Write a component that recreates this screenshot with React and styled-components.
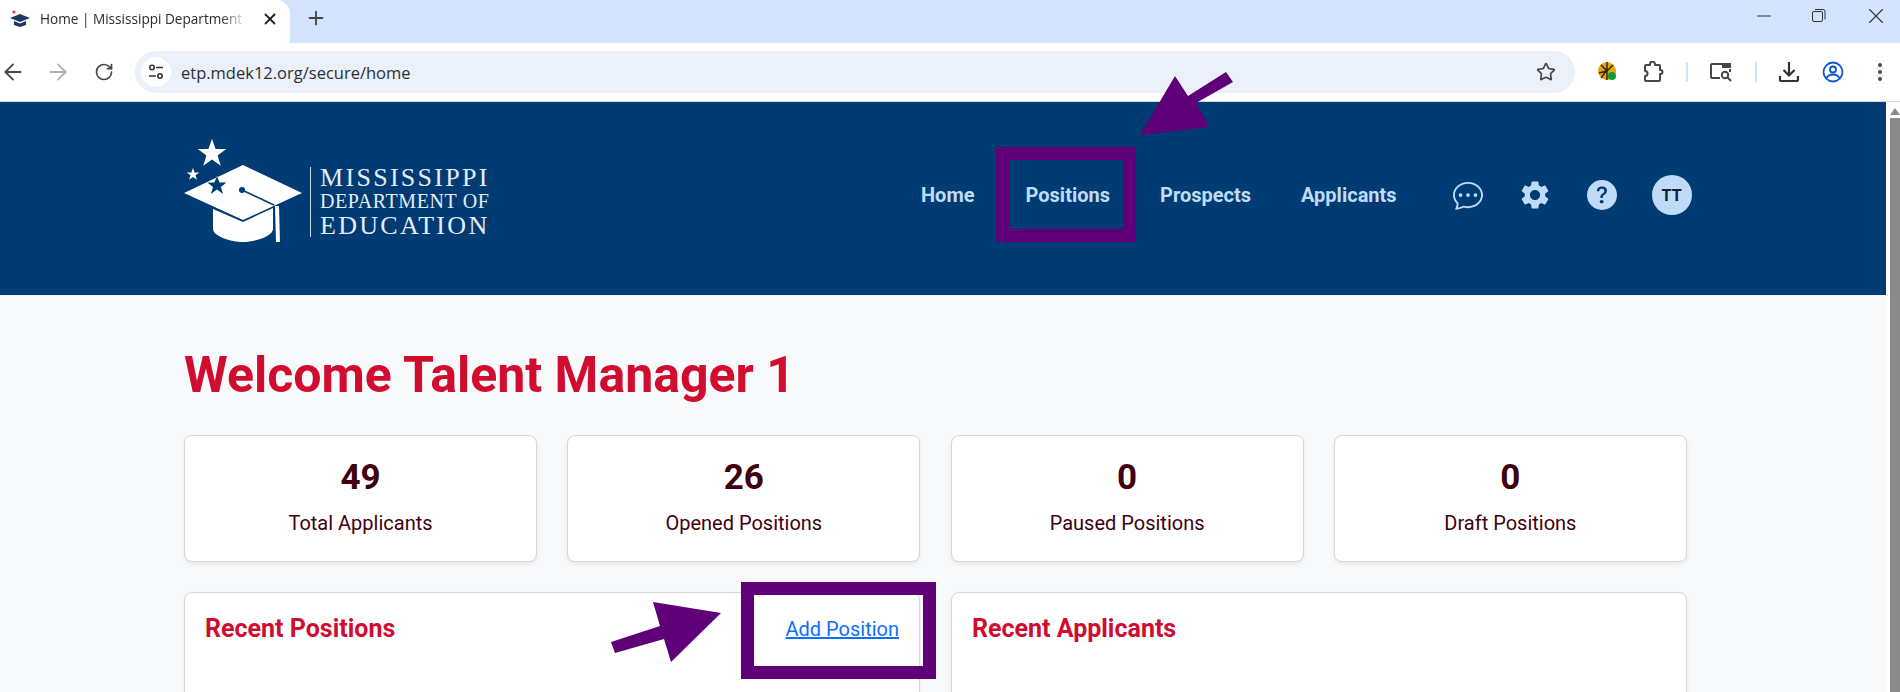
import styled, { createGlobalStyle } from "styled-components"
import { ArrowLeft, ArrowRight, RotateCw, Star, Plus, X, Minus } from "lucide-react"
import { BsChatDots, BsFillQuestionCircleFill } from "react-icons/bs"
import { MdSettings } from "react-icons/md"

const Global = createGlobalStyle`
  html, body { margin: 0; padding: 0; height: 692px; overflow: hidden; background: #fff; }
  * { box-sizing: border-box; }
  body { font-family: Roboto, sans-serif; }
`
const Screen = styled.div`
  position: relative;
  width: 1900px;
  height: 692px;
  overflow: hidden;
  display: flex;
  flex-direction: column;
`
const TabStrip = styled.div`
  height: 43px;
  background: #d3e3fd;
  display: flex;
  align-items: center;
`
const Tab = styled.div`
  width: 290px;
  height: 43px;
  background: #fff;
  border-radius: 0 14px 0 0;
  display: flex;
  align-items: center;
  padding: 0 0 6px 9px;
  font-family: "Open Sans", sans-serif;
  font-size: 13.6px;
  color: #2b2b2b;
`
const TabTitle = styled.span`
  width: 206px;
  margin-left: 9px;
  white-space: nowrap;
  -webkit-mask-image: linear-gradient(to right, #000 88%, transparent);
  mask-image: linear-gradient(to right, #000 88%, transparent);
`
const TabClose = styled.span`
  display: flex;
  margin-left: 15px;
  color: #222;
`
const NewTab = styled.span`
  display: flex;
  margin: 0 0 7px 15px;
  color: #444;
`
const WindowButtons = styled.div`
  margin-left: auto;
  display: flex;
  gap: 37px;
  padding: 0 11px 11px 0;
  color: #333;
  align-items: center;
`
const Toolbar = styled.div`
  height: 59px;
  background: #fff;
  border-bottom: 1px solid #d8d8d8;
  display: flex;
  align-items: center;
  color: #474747;
`
const NavIcons = styled.div`
  display: flex;
  gap: 19px;
  width: 135px;
  align-items: center;
`
const Reload = styled(RotateCw)`
  margin-left: 4px;
`
const Omnibox = styled.div`
  width: 1440px;
  height: 42px;
  border-radius: 21px;
  background: #ebf0f9;
  display: flex;
  align-items: center;
  padding: 0 19px 0 6px;
`
const TuneBadge = styled.span`
  width: 30px;
  height: 30px;
  border-radius: 50%;
  background: #fff;
  display: flex;
  align-items: center;
  justify-content: center;
`
const Url = styled.span`
  flex: 1;
  margin-left: 10px;
  font-family: "Open Sans", sans-serif;
  font-size: 16.5px;
  color: #2a2f36;
`
const ToolIcons = styled.div`
  display: flex;
  align-items: center;
  margin-left: 23px;
  gap: 21.5px;
`
const ToolSlot = styled.span`
  display: flex;
  margin-left: ${p => p.$push || 0}px;
`
const Divider = styled.span`
  width: 2px;
  height: 20px;
  background: #d3e3fd;
`
const Body = styled.div`
  flex: 1;
  display: flex;
  min-height: 0;
`
const Page = styled.div`
  width: 1886px;
  background: #f8f9fa;
  overflow: hidden;
`
const Scrollbar = styled.div`
  flex: 1;
  background: #fff;
  display: flex;
  flex-direction: column;
  align-items: flex-end;
`
const ScrollArrow = styled.div`
  width: 0;
  height: 0;
  margin: 6px 0 3px;
  border-left: 5px solid transparent;
  border-right: 5px solid transparent;
  border-bottom: 7px solid #8a8a8a;
`
const ScrollThumb = styled.div`
  width: 10px;
  flex: 1;
  background: #8a8a8a;
`
const Header = styled.header`
  height: 193px;
  background: #003b73;
  display: flex;
  align-items: flex-start;
  padding: 36px 0 0 184px;
`
const LogoWrap = styled.div`
  width: 306px;
  height: 104px;
  display: flex;
  align-items: center;
`
const LogoText = styled.div`
  align-self: flex-end;
  margin: 0 0 5px 6px;
  padding-left: 9px;
  border-left: 1px solid #c9d6e4;
  height: 70px;
  display: flex;
  flex-direction: column;
  justify-content: space-between;
  font-family: "Liberation Serif", serif;
  color: #e6ecf3;
  white-space: nowrap;
  line-height: 0.86;
`
const LogoLine = styled.span`
  font-size: ${p => p.$size}px;
  letter-spacing: ${p => p.$spacing}px;
`
const Nav = styled.nav`
  display: flex;
  align-items: center;
  height: 48px;
  margin: 33px 0 0 431px;
  font-size: 20px;
  font-weight: 700;
  color: #bfdbf7;
`
const NavLink = styled.a`
  margin-right: ${p => p.$gap}px;
  white-space: nowrap;
`
const NavIcon = styled.span`
  display: flex;
  width: 30px;
  justify-content: center;
  margin-right: ${p => p.$gap}px;
  & > svg {
    flex-shrink: 0;
  }
`
const Avatar = styled.span`
  width: 40px;
  height: 40px;
  border-radius: 50%;
  background: #bfdbf7;
  color: #0e2238;
  font-size: 16px;
  font-weight: 700;
  display: flex;
  align-items: center;
  justify-content: center;
`
const Main = styled.main`
  padding: 52px 0 0 184px;
`
const Title = styled.h1`
  margin: 0;
  font-size: 50px;
  font-weight: 700;
  line-height: 56px;
  color: #d00c2f;
`
const Stats = styled.div`
  display: grid;
  grid-template-columns: repeat(4, 353px);
  column-gap: 30.3px;
  margin-top: 32px;
`
const Card = styled.div`
  background: #fff;
  border: 1px solid #d5d7d9;
  border-radius: 8px;
  box-shadow: 0 2px 4px rgba(0, 0, 0, 0.07);
`
const StatCard = styled(Card)`
  height: 127px;
  display: flex;
  flex-direction: column;
  align-items: center;
  color: #3f0010;
`
const StatValue = styled.div`
  margin-top: 23px;
  font-size: 35px;
  font-weight: 700;
  line-height: 38px;
`
const StatLabel = styled.div`
  margin-top: 14px;
  font-size: 20px;
  line-height: 24px;
`
const Panels = styled.div`
  display: grid;
  grid-template-columns: 736px 736px;
  column-gap: 31px;
  margin-top: 30px;
`
const Panel = styled(Card)`
  height: 200px;
  display: flex;
  justify-content: space-between;
  align-items: flex-start;
  padding: 20px 20px;
`
const PanelTitle = styled.h2`
  margin: 0;
  font-size: 25px;
  font-weight: 700;
  line-height: 32px;
  color: #d00c2f;
`
const PanelLink = styled.a`
  font-size: 20px;
  line-height: 32px;
  color: #0d6efd;
  text-decoration: underline;
`
const Highlight = styled.div`
  position: absolute;
  left: ${p => p.$x}px;
  top: ${p => p.$y}px;
  width: ${p => p.$w}px;
  height: ${p => p.$h}px;
  border: 13px solid #5f0078;
`
const ArrowLayer = styled.svg`
  position: absolute;
  left: 0;
  top: 0;
  pointer-events: none;
`

const Tune = () => (
  <svg width="18" height="18" viewBox="0 0 18 18" fill="none" stroke="#333" strokeWidth="1.6">
    <circle cx="5" cy="4.5" r="2.2" />
    <path d="M9 4.5h7M2 13h7" />
    <circle cx="13" cy="13" r="2.2" />
  </svg>
)
const Favicon = () => (
  <svg width="22" height="20" viewBox="0 0 22 20">
    <circle cx="5" cy="3" r="1.6" fill="#d9435a" />
    <path d="M1 9l10-4 10 4-10 4z" fill="#1d3a66" />
    <path d="M5 12v4l6 2 6-2v-4l-6 2.4z" fill="#1d3a66" />
  </svg>
)
const ExtBadge = () => (
  <svg width="20" height="20" viewBox="0 0 20 20">
    <circle cx="9" cy="9" r="9" fill="#e2a800" />
    <path d="M9 0v18M3 3l6 6 6-6M1 11l8-2M3 16c3-3 3-6 6-7" stroke="#222" strokeWidth="1.4" fill="none" />
    <circle cx="14" cy="14" r="4" fill="#129a3f" />
  </svg>
)
const PuzzleIcon = () => (
  <svg width="22" height="22" viewBox="0 0 22 22" fill="none" stroke="#474747" strokeWidth="2" strokeLinejoin="round">
    <path d="M8 4V3a2.5 2.5 0 0 1 5 0v1h4a1 1 0 0 1 1 1v4h.5a2 2 0 0 1 0 4H18v6a1 1 0 0 1-1 1H4a1 1 0 0 1-1-1v-4a2.5 2.5 0 0 0 0-5V5a1 1 0 0 1 1-1z" />
  </svg>
)
const MediaSearch = () => (
  <svg width="24" height="22" viewBox="0 0 24 22" fill="none" stroke="#474747" strokeWidth="2">
    <path d="M11 17H3a1 1 0 0 1-1-1V4a1 1 0 0 1 1-1h10" />
    <path d="M13 2h9v5h-9z" fill="#474747" stroke="none" />
    <path d="M21 8v3" />
    <circle cx="16" cy="14" r="3.2" />
    <path d="M18.5 16.5L22 20" />
  </svg>
)
const DownloadIcon = () => (
  <svg width="22" height="22" viewBox="0 0 22 22" fill="none" stroke="#333" strokeWidth="2.2">
    <path d="M11 1v13M5.5 9l5.5 5.5L16.5 9" />
    <path d="M2 15v3.5a1.5 1.5 0 0 0 1.5 1.5h15a1.5 1.5 0 0 0 1.5-1.5V15" />
  </svg>
)
const ProfileIcon = () => (
  <svg width="22" height="22" viewBox="0 0 22 22" fill="none" stroke="#0b57d0" strokeWidth="1.8">
    <circle cx="11" cy="11" r="9.5" />
    <circle cx="11" cy="8.5" r="3" />
    <path d="M4.5 17c1.5-2.5 3.5-3.5 6.5-3.5s5 1 6.5 3.5" />
  </svg>
)
const DotsIcon = () => (
  <svg width="6" height="20" viewBox="0 0 6 20" fill="#474747">
    <circle cx="3" cy="3" r="2" />
    <circle cx="3" cy="10" r="2" />
    <circle cx="3" cy="17" r="2" />
  </svg>
)
const RestoreIcon = () => (
  <svg width="14" height="14" viewBox="0 0 14 14" fill="none" stroke="#333" strokeWidth="1">
    <rect x="0.5" y="2.5" width="10" height="10" rx="1.5" />
    <path d="M3 0.5h8a2 2 0 0 1 2 2v8" />
  </svg>
)
const Logo = () => (
  <svg width="120" height="104" viewBox="0 0 120 104" fill="#fff">
    <path d="M28 0l3.6 10h10.6l-8.6 6.4 3.2 10.4-8.8-6.2-8.8 6.2 3.2-10.4-8.6-6.4h10.6z" transform="translate(0 1)" />
    <path d="M9 30l1.6 4.4h4.7l-3.8 2.8 1.4 4.6-3.9-2.8-3.9 2.8 1.4-4.6L2.7 34.4h4.7z" />
    <path fillRule="evenodd" d="M59 27l59 28-59 27L0 55zM33 38l-2.6 6.6h-7l5.6 4.3-2.1 7 6.1-4.3 6 4.3-2.1-7 5.6-4.3h-7z" />
    <path d="M29 71v20c0 7 18 13 30 13s30-6 30-13V70L59 84z" />
    <circle cx="58" cy="52" r="3" fill="#003b73" />
    <path d="M58 52l32 15" stroke="#003b73" strokeWidth="1.6" />
    <path d="M91 68h4l1 37h-4z" />
  </svg>
)

const stats = [
  { value: 49, label: "Total Applicants" },
  { value: 26, label: "Opened Positions" },
  { value: 0, label: "Paused Positions" },
  { value: 0, label: "Draft Positions" },
]

export default function App() {
  return (
    <Screen>
      <Global />
      <TabStrip>
        <Tab>
          <Favicon />
          <TabTitle>Home | Mississippi Department</TabTitle>
          <TabClose><X size={18} strokeWidth={2.4} /></TabClose>
        </Tab>
        <NewTab><Plus size={22} strokeWidth={2} /></NewTab>
        <WindowButtons>
          <Minus size={22} strokeWidth={1.2} />
          <RestoreIcon />
          <X size={26} strokeWidth={1} />
        </WindowButtons>
      </TabStrip>
      <Toolbar>
        <NavIcons>
          <ArrowLeft size={26} strokeWidth={1.7} />
          <ArrowRight size={26} strokeWidth={1.7} color="#b0b0b0" />
          <Reload size={20} />
        </NavIcons>
        <Omnibox>
          <TuneBadge><Tune /></TuneBadge>
          <Url>etp.mdek12.org/secure/home</Url>
          <Star size={20} />
        </Omnibox>
        <ToolIcons>
          <ExtBadge />
          <ToolSlot $push={2.5}><PuzzleIcon /></ToolSlot>
          <Divider />
          <MediaSearch />
          <Divider />
          <DownloadIcon />
          <ProfileIcon />
          <ToolSlot $push={11.5}><DotsIcon /></ToolSlot>
        </ToolIcons>
      </Toolbar>
      <Body>
        <Page>
          <Header>
            <LogoWrap>
              <Logo />
              <LogoText>
                <LogoLine $size={26} $spacing={2.3}>MISSISSIPPI</LogoLine>
                <LogoLine $size={20} $spacing={0.6}>DEPARTMENT OF</LogoLine>
                <LogoLine $size={26} $spacing={2.3}>EDUCATION</LogoLine>
              </LogoText>
            </LogoWrap>
            <Nav>
              <NavLink $gap={51}>Home</NavLink>
              <NavLink $gap={50}>Positions</NavLink>
              <NavLink $gap={50}>Prospects</NavLink>
              <NavLink $gap={56}>Applicants</NavLink>
              <NavIcon $gap={37}><BsChatDots size={30} /></NavIcon>
              <NavIcon $gap={37}><MdSettings size={34} /></NavIcon>
              <NavIcon $gap={35}><BsFillQuestionCircleFill size={30} /></NavIcon>
              <Avatar>TT</Avatar>
            </Nav>
          </Header>
          <Main>
            <Title>Welcome Talent Manager 1</Title>
            <Stats>
              {stats.map(s => (
                <StatCard key={s.label}>
                  <StatValue>{s.value}</StatValue>
                  <StatLabel>{s.label}</StatLabel>
                </StatCard>
              ))}
            </Stats>
            <Panels>
              <Panel>
                <PanelTitle>Recent Positions</PanelTitle>
                <PanelLink>Add Position</PanelLink>
              </Panel>
              <Panel>
                <PanelTitle>Recent Applicants</PanelTitle>
              </Panel>
            </Panels>
          </Main>
        </Page>
        <Scrollbar>
          <ScrollArrow />
          <ScrollThumb />
        </Scrollbar>
      </Body>
      <Highlight $x={996} $y={147} $w={140} $h={95} />
      <Highlight $x={741} $y={582} $w={195} $h={97} />
      <ArrowLayer width="1900" height="692" fill="#5f0078">
        <polygon points="1140,135 1175,76 1188,96 1226,72 1233,82 1196,103 1209,127" />
        <polygon points="721,613 653,602 660,626 611,642 615,653 664,639 671,662" />
      </ArrowLayer>
    </Screen>
  )
}
